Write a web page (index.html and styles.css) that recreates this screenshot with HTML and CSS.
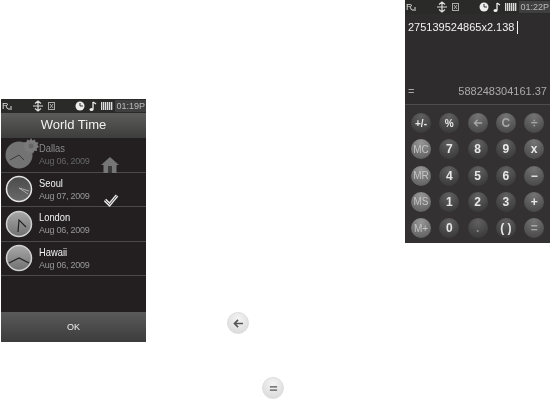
FILE: index.html
```html
<!DOCTYPE html>
<html lang="en">
<head>
    <meta charset="UTF-8">
    <meta name="viewport" content="width=device-width, initial-scale=1.0">
    <title>World Time and Calculator</title>
    <link rel="stylesheet" href="styles.css">
</head>
<body>
    <svg class="defs" width="0" height="0">
        <defs>
            <linearGradient id="face-light" x1="0" y1="0" x2="0" y2="1">
                <stop offset="0" stop-color="#a8a8a8"/>
                <stop offset="1" stop-color="#707070"/>
            </linearGradient>
            <linearGradient id="face-dark" x1="0" y1="0" x2="0" y2="1">
                <stop offset="0" stop-color="#4a4a4a"/>
                <stop offset="1" stop-color="#6a6a6a"/>
            </linearGradient>
        </defs>
        <symbol id="status-icons" viewBox="0 0 110 12">
            <rect x="7.500" y="8" width="1" height="2" fill="#ddd"/>
            <rect x="9.500" y="6" width="1" height="4" fill="#ddd"/>
            <path d="M37 1v10M32 6h10M34 3.500l3-2.500 3 2.500M34 8.500l3 2.500 3-2.500" stroke="#ddd" stroke-width="1.200" fill="none"/>
            <rect x="47.500" y="2.500" width="6" height="7" fill="none" stroke="#aaa"/>
            <path d="M49 4l3 4M52 4l-3 4" stroke="#aaa"/>
            <circle cx="79" cy="6" r="4.500" fill="#eee"/>
            <path d="M79 3v3h3" stroke="#333" fill="none"/>
            <path d="M92 2v7" stroke="#eee" stroke-width="1.300"/>
            <path d="M92 2l3 2" stroke="#eee" stroke-width="1.300"/>
            <ellipse cx="90.500" cy="9.500" rx="2" ry="1.500" fill="#eee"/>
        </symbol>
    </svg>

    <section class="phone phone-world">
        <div class="status-bar">
            <span class="signal">R</span>
            <svg class="status-icons"><use href="#status-icons"/></svg>
            <span class="battery"></span>
            <span class="status-time">01:19P</span>
        </div>
        <h1 class="title-bar">World Time</h1>
        <ul class="city-list">
            <li class="city city-home">
                <svg class="clock" viewBox="0 0 28 28">
                    <circle cx="14" cy="14" r="13.500" fill="#737373"/>
                    <path d="M14 14L5 19M14 14l5 5" stroke="#3a3a3a" fill="none"/>
                </svg>
                <svg class="gear" viewBox="0 0 16 16">
                    <path d="M8 0l1.500 2.500L12 1.500l.5 2.500 3 .5-1 2.500L16 9l-2.300 1.300.5 2.700-2.700-.2L10 15.500 8 14l-2 1.500-1.500-2.700-2.700.2.500-2.700L0 9l1.500-2-1-2.500 3-.5L4 1.500l2.500 1z" fill="#7a7a7a"/>
                    <circle cx="8" cy="8" r="2.500" fill="#666"/>
                </svg>
                <div class="city-text">
                    <span class="city-name">Dallas</span>
                    <span class="city-date">Aug 06, 2009</span>
                </div>
                <svg class="home-mark" viewBox="0 0 18 16">
                    <path d="M9 0L0 8h2.500v8h13V8H18z" fill="#767676"/>
                    <rect x="7" y="9" width="4" height="7" fill="#3a3a3a"/>
                </svg>
            </li>
            <li class="city">
                <svg class="clock" viewBox="0 0 28 28">
                    <circle cx="14" cy="14" r="12.500" fill="url(#face-dark)" stroke="#e4e4e4" stroke-width="1.500"/>
                    <path d="M14 13l10 3M14 13l9 6" stroke="#aaa" fill="none"/>
                </svg>
                <div class="city-text">
                    <span class="city-name">Seoul</span>
                    <span class="city-date">Aug 07, 2009</span>
                </div>
                <svg class="check-mark" viewBox="0 0 16 14">
                    <path d="M2 7l4.500 4.500L14 2.500" fill="none" stroke="#e4e4e4" stroke-width="3.400"/>
                    <path d="M2 7l4.500 4.500L14 2.500" fill="none" stroke="#555" stroke-width="1"/>
                </svg>
            </li>
            <li class="city">
                <svg class="clock" viewBox="0 0 28 28">
                    <circle cx="14" cy="14" r="12.500" fill="url(#face-light)" stroke="#d0d0d0" stroke-width="1.500"/>
                    <path d="M13 22l1-12 7 7" stroke="#222" stroke-width="1.200" fill="none"/>
                </svg>
                <div class="city-text">
                    <span class="city-name">London</span>
                    <span class="city-date">Aug 06, 2009</span>
                </div>
            </li>
            <li class="city">
                <svg class="clock" viewBox="0 0 28 28">
                    <circle cx="14" cy="14" r="12.500" fill="url(#face-light)" stroke="#d0d0d0" stroke-width="1.500"/>
                    <path d="M4 19l10-5 10 5" stroke="#222" stroke-width="1.200" fill="none"/>
                </svg>
                <div class="city-text">
                    <span class="city-name">Hawaii</span>
                    <span class="city-date">Aug 06, 2009</span>
                </div>
            </li>
        </ul>
        <div class="soft-bar">OK</div>
    </section>

    <section class="phone phone-calc">
        <div class="status-bar">
            <span class="signal">R</span>
            <svg class="status-icons"><use href="#status-icons"/></svg>
            <span class="battery"></span>
            <span class="status-time">01:22P</span>
        </div>
        <div class="calc-screen">
            <div class="calc-input">275139524865x2.138<span class="caret"></span></div>
            <div class="calc-result"><span>=</span><span>588248304161.37</span></div>
        </div>
        <div class="keypad">
            <span class="key key-small">+/-</span>
            <span class="key key-small">%</span>
            <span class="key key-dim">
                <svg class="key-arrow" viewBox="0 0 12 10"><path d="M11 5H2M5.500 1L1.500 5l4 4" fill="none" stroke="#a8a8a8" stroke-width="1.600"/></svg>
            </span>
            <span class="key key-dim">C</span>
            <span class="key key-dim">÷</span>
            <span class="key key-mem">MC</span>
            <span class="key">7</span>
            <span class="key">8</span>
            <span class="key">9</span>
            <span class="key key-op">x</span>
            <span class="key key-mem">MR</span>
            <span class="key">4</span>
            <span class="key">5</span>
            <span class="key">6</span>
            <span class="key key-op">−</span>
            <span class="key key-mem">MS</span>
            <span class="key">1</span>
            <span class="key">2</span>
            <span class="key">3</span>
            <span class="key key-op">+</span>
            <span class="key key-mem">M+</span>
            <span class="key">0</span>
            <span class="key key-blank">.</span>
            <span class="key">( )</span>
            <span class="key key-dim">=</span>
        </div>
    </section>

    <span class="inline-key key-back">
        <svg viewBox="0 0 12 10"><path d="M11 5H2M5.500 1L1.500 5l4 4" fill="none" stroke="#555" stroke-width="1.800"/></svg>
    </span>
    <span class="inline-key key-equals">
        <svg viewBox="0 0 12 10"><path d="M2 3.200h8M2 6.800h8" fill="none" stroke="#555" stroke-width="1.500"/></svg>
    </span>
</body>
</html>
```

FILE: styles.css
```css
* {
    margin: 0;
    padding: 0;
    box-sizing: border-box;
}

html, body {
    width: 551px;
    height: 400px;
    overflow: hidden;
}

body {
    position: relative;
    background: white;
    font-family: 'Liberation Sans', sans-serif;
}

.defs {
    position: absolute;
}

/* the two handsets and the two keys sit free on the page */
.phone {
    position: absolute;
    display: flex;
    flex-direction: column;
    width: 145px;
    height: 243px;
    background: #231f20;
    color: #eee;
    filter: blur(0.4px);
}

.phone-world {
    left: 1px;
    top: 99px;
}

.phone-calc {
    left: 405px;
    top: 0;
    background: #333132;
}

.status-bar {
    position: relative;
    display: flex;
    align-items: center;
    height: 14px;
    flex: none;
    background: #2a2a28;
    font-size: 9px;
}

.signal {
    margin-left: 1px;
    color: #ddd;
}

.status-icons {
    position: absolute;
    left: 0;
    top: 1px;
    width: 110px;
    height: 12px;
}

.battery {
    position: absolute;
    left: 100px;
    top: 3px;
    width: 12px;
    height: 8px;
    background: repeating-linear-gradient(90deg, #ddd 0 1px, #666 1px 2px);
}

.status-time {
    margin-left: auto;
    padding: 1px 1px;
    background: #3f3f3f;
    color: #bbb;
    font-size: 9px;
}

.title-bar {
    height: 25px;
    flex: none;
    background: linear-gradient(#5c5c5a, #3d3d3b);
    font-size: 13px;
    font-weight: normal;
    line-height: 24px;
    text-align: center;
    color: #f0f0f0;
}

.city-list {
    flex: 1;
    list-style: none;
}

.city {
    position: relative;
    display: flex;
    align-items: center;
    height: 34.500px;
    padding-left: 4px;
    border-bottom: 1px solid #4a4a48;
}

.clock {
    width: 28px;
    height: 28px;
    flex: none;
}

.city-text {
    display: flex;
    flex-direction: column;
    gap: 1px;
    margin-left: 6px;
}

.city-name {
    font-size: 11px;
    line-height: 13px;
    color: #f2f2f2;
    transform: scaleX(0.85);
    transform-origin: left;
}

.city-home .city-name {
    color: #8a8a8a;
}

.city-date {
    font-size: 9px;
    line-height: 11px;
    letter-spacing: -0.25px;
    color: #999;
}

.city-home .city-date {
    color: #666;
}

.gear {
    position: absolute;
    left: 22px;
    top: 0;
    width: 16px;
    height: 16px;
}

.home-mark {
    position: absolute;
    left: 100px;
    top: 19px;
    width: 18px;
    height: 16px;
}

.check-mark {
    position: absolute;
    left: 102px;
    top: 20px;
    width: 16px;
    height: 14px;
}

.soft-bar {
    height: 30px;
    flex: none;
    background: linear-gradient(#5a5a5a, #3c3c3c);
    font-size: 9px;
    line-height: 30px;
    text-align: center;
    color: #eee;
}

.calc-screen {
    display: flex;
    flex-direction: column;
    justify-content: space-between;
    height: 91px;
    flex: none;
    padding: 7px 3px 6px 3px;
    border-bottom: 1px solid #4d4d4d;
    background: #2e2c2d;
}

.calc-input {
    display: flex;
    align-items: center;
    font-size: 11px;
    line-height: 13px;
    color: #f2f2f2;
}

.caret {
    width: 1px;
    height: 13px;
    margin-left: 3px;
    background: #f2f2f2;
}

.calc-result {
    display: flex;
    justify-content: space-between;
    font-size: 11px;
    line-height: 13px;
    color: #aaa;
}

.keypad {
    display: grid;
    grid-template-columns: repeat(5, 20px);
    grid-auto-rows: 20px;
    column-gap: 8.300px;
    row-gap: 6.300px;
    padding: 8px 0 0 6px;
}

.key {
    display: flex;
    align-items: center;
    justify-content: center;
    border-radius: 50%;
    background: radial-gradient(circle at 50% 20%, #606060, #3e3e3e 75%);
    font-size: 12px;
    font-weight: bold;
    color: #e8e8e8;
}

.key-small {
    font-size: 10px;
}

.key-arrow {
    width: 10px;
    height: 8px;
}

.key-dim {
    background: radial-gradient(circle at 50% 15%, #747474, #4c4c4c 80%);
    color: #a8a8a8;
}

.key-op {
    background: radial-gradient(circle at 50% 15%, #747474, #4c4c4c 80%);
}

.key-blank {
    color: #8f8f8f;
}

.key-mem {
    background: radial-gradient(circle at 50% 20%, #969696, #646464 80%);
    color: #c4c4c4;
    font-size: 10px;
    font-weight: normal;
}

.inline-key {
    position: absolute;
    display: flex;
    align-items: center;
    justify-content: center;
    width: 22px;
    height: 22px;
    border: 1px solid #ddd;
    border-radius: 50%;
    background: radial-gradient(circle at 50% 30%, #f4f4f4, #d6d6d6);
    filter: blur(0.4px);
}

.inline-key svg {
    width: 11px;
    height: 9px;
}

.key-back {
    left: 227px;
    top: 312px;
}

.key-equals {
    left: 262px;
    top: 377px;
}
```
